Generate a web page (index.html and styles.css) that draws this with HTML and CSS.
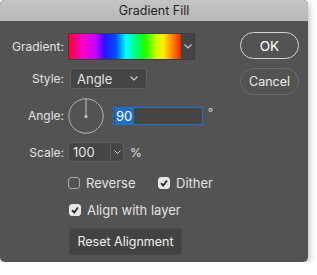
FILE: index.html
```html
<!DOCTYPE html>
<html lang="en">
<head>
  <meta charset="UTF-8" />
  <title>Gradient Fill</title>
  <link rel="stylesheet" href="styles.css">
</head>
<body>

<div class="dialog">
  <div class="titlebar">Gradient Fill</div>
  <div class="dialog-body">
    <div class="form">
      <div class="row row-gradient">
        <span class="label">Gradient:</span>
        <div class="gradient-picker">
          <div class="swatch"></div>
          <div class="picker-drop">
            <svg width="8" height="5" viewBox="0 0 8 5"><polyline points="0.5,0.5 4,4 7.5,0.5" fill="none" stroke="#cfcfcf" stroke-width="1.1"/></svg>
          </div>
        </div>
      </div>

      <div class="row row-style">
        <span class="label">Style:</span>
        <div class="select">
          <span>Angle</span>
          <svg width="8" height="5" viewBox="0 0 8 5"><polyline points="0.5,0.5 4,4 7.5,0.5" fill="none" stroke="#cfcfcf" stroke-width="1.1"/></svg>
        </div>
      </div>

      <div class="row row-angle">
        <span class="label">Angle:</span>
        <svg class="dial" width="36" height="36" viewBox="0 0 36 36">
          <circle cx="18" cy="18" r="17.2" fill="none" stroke="#b4b4b4" stroke-width="1"/>
          <line x1="18" y1="18" x2="18" y2="1" stroke="#c8c8c8" stroke-width="1"/>
          <circle cx="18" cy="18.5" r="1.6" fill="#c8c8c8"/>
        </svg>
        <div class="text-input focused"><span class="selected">90</span></div>
        <span class="unit unit-deg">°</span>
      </div>

      <div class="row row-scale">
        <span class="label">Scale:</span>
        <div class="combo">
          <span class="combo-value">100</span>
          <span class="combo-drop">
            <svg width="7" height="4" viewBox="0 0 7 4"><polyline points="0.5,0.5 3.5,3.5 6.5,0.5" fill="none" stroke="#cfcfcf" stroke-width="1"/></svg>
          </span>
        </div>
        <span class="unit">%</span>
      </div>

      <div class="row row-checks">
        <label class="check check-reverse"><span class="box"></span>Reverse</label>
        <label class="check"><span class="box checked"><svg width="10" height="10" viewBox="0 0 10 10"><polyline points="2,5.2 4.2,7.5 8,2.5" fill="none" stroke="#2a2a2a" stroke-width="1.8"/></svg></span>Dither</label>
      </div>

      <div class="row row-align">
        <label class="check"><span class="box checked"><svg width="10" height="10" viewBox="0 0 10 10"><polyline points="2,5.2 4.2,7.5 8,2.5" fill="none" stroke="#2a2a2a" stroke-width="1.8"/></svg></span>Align with layer</label>
      </div>

      <div class="row row-reset">
        <button class="reset-btn">Reset Alignment</button>
      </div>
    </div>

    <div class="buttons">
      <button class="btn btn-default">OK</button>
      <button class="btn">Cancel</button>
    </div>
  </div>
</div>

</body>
</html>
```

FILE: styles.css
```css
:root {
  --panel: #535353;
  --field: #454545;
  --field-border: #5f5f5f;
  --text: #e2e2e2;
  --focus: #1b72d8;
}

body {
  margin: 0;
  background: #ffffff;
  font-family: "Inter", "Liberation Sans", sans-serif;
  font-size: 12px;
  color: var(--text);
}

.dialog {
  width: 308px;
  height: 262px;
  background: var(--panel);
  border-radius: 5px;
  overflow: hidden;
  box-shadow: 0 3px 8px rgba(0, 0, 0, 0.35);
}

.titlebar {
  height: 21px;
  line-height: 21px;
  text-align: center;
  background: linear-gradient(#c4c4c4, #b8b8b8);
  color: #1f1f1f;
  font-size: 12.5px;
}

.dialog-body {
  display: flex;
  padding-top: 12px;
}

.form {
  width: 240px;
}

.row {
  display: flex;
  align-items: center;
}

.label {
  width: 64px;
  text-align: right;
  margin-right: 4px;
  flex: none;
}

/* gradient swatch */
.row-gradient { height: 27px; }

.gradient-picker {
  display: flex;
  width: 125px;
  height: 25px;
  border: 1px solid #3d3d3d;
  background: var(--field);
}

.swatch {
  width: 112px;
  background: linear-gradient(to right,
    #ff0036 0%, #ff00c8 12%, #c800ff 24%, #2a10ff 32%, #0050ff 42%,
    #00ffff 51%, #00ff7a 60%, #1cff00 68%, #c8ff00 78%, #ffee00 84%,
    #ff8a00 92%, #ff2000 100%);
}

.picker-drop {
  flex: 1;
  display: flex;
  align-items: center;
  justify-content: center;
}

/* style select */
.row-style { margin-top: 8px; height: 21px; }

.select {
  margin-left: 2px;
  width: 77px;
  height: 21px;
  box-sizing: border-box;
  border: 1px solid var(--field-border);
  border-radius: 3px;
  background: var(--field);
  display: flex;
  align-items: center;
  justify-content: space-between;
  padding: 0 8px 0 6px;
  font-size: 13px;
}

/* angle */
.row-angle { margin-top: 9px; height: 35px; }

.dial { flex: none; }

.text-input {
  margin-left: 9px;
  width: 90px;
  height: 18px;
  box-sizing: border-box;
  background: var(--field);
  display: flex;
  align-items: center;
  padding-left: 1px;
}

.text-input.focused {
  border: 1px solid var(--focus);
}

.selected {
  background: #1f6fc5;
  color: #ffffff;
  padding: 0 2px 0 1px;
  line-height: 16px;
  font-size: 13px;
}

.unit { margin-left: 6px; }

.unit-deg {
  margin-left: 5px;
  align-self: flex-start;
  margin-top: 7px;
  font-size: 11px;
}

/* scale */
.row-scale { margin-top: 9px; height: 20px; }

.combo {
  display: flex;
  width: 56px;
  height: 20px;
  box-sizing: border-box;
  border: 1px solid var(--field-border);
  border-radius: 3px;
  background: var(--field);
}

.combo-value {
  width: 42px;
  padding-left: 4px;
  box-sizing: border-box;
  line-height: 18px;
  font-size: 13px;
  border-right: 1px solid var(--field-border);
}

.combo-drop {
  flex: 1;
  display: flex;
  align-items: center;
  justify-content: center;
}

/* checkboxes */
.row-checks { margin-top: 15px; height: 12px; padding-left: 68px; }
.row-align { margin-top: 14px; height: 13px; padding-left: 69px; }

.check {
  display: flex;
  align-items: center;
  gap: 6px;
  font-size: 13px;
}

.check-reverse { width: 90px; }

.box {
  width: 12px;
  height: 12px;
  box-sizing: border-box;
  border: 1px solid #a8a8a8;
  border-radius: 3px;
  display: flex;
  align-items: center;
  justify-content: center;
}

.box.checked {
  background: #e6e6e6;
  border-color: #e6e6e6;
}

/* reset */
.row-reset { margin-top: 12px; padding-left: 69px; }

.reset-btn {
  width: 113px;
  height: 27px;
  padding: 0;
  white-space: nowrap;
  background: #434343;
  border: 1px solid #4a4a4a;
  border-radius: 3px;
  color: #f0f0f0;
  font: inherit;
  font-size: 12.5px;
}

/* dialog buttons */
.buttons {
  display: flex;
  flex-direction: column;
  gap: 9px;
  margin-top: -1px;
}

.btn {
  width: 59px;
  height: 27px;
  padding: 0;
  border-radius: 14px;
  background: transparent;
  border: 1px solid #6c6c6c;
  color: #ececec;
  font: inherit;
  font-size: 12.5px;
}

.btn-default {
  border: 1.5px solid #d2d2d2;
  color: #ffffff;
  font-size: 13.5px;
}
```
